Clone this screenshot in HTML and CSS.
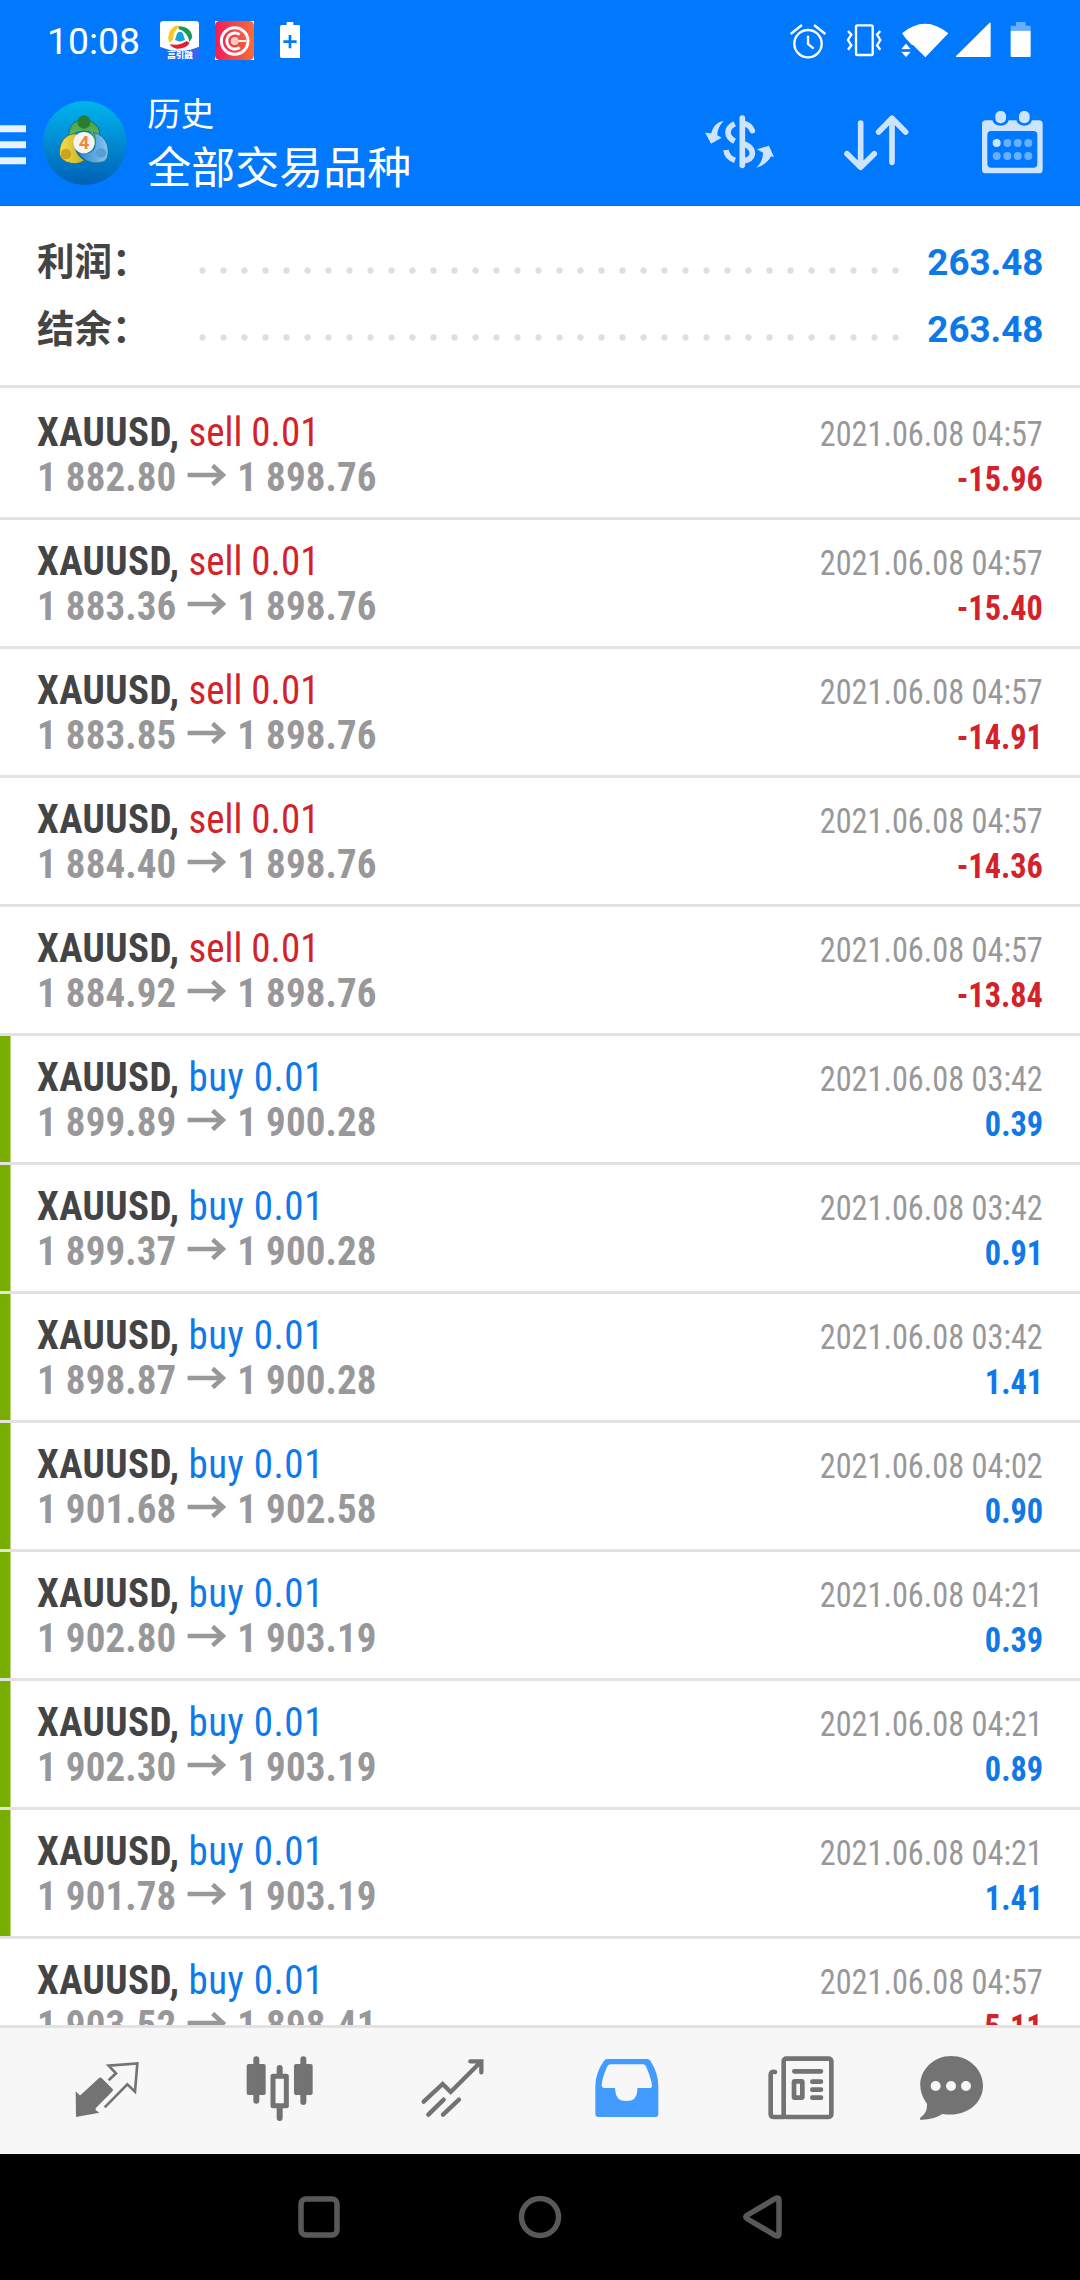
FILE: index.html
```html
<!DOCTYPE html>
<html lang="zh-CN">
<head>
<meta charset="utf-8">
<title>历史</title>
<link rel="stylesheet" href="styles.css">
</head>
<body>
<svg width="0" height="0" class="defs">
  <symbol id="arrow" viewBox="0 0 39 24" preserveAspectRatio="none"><path d="M0 12H36M25.500 2.500L36 12L25.500 21.500" fill="none" stroke="currentColor" stroke-width="4.500"/></symbol>
</svg>
<header class="header">
  <div class="status">
    <span class="clock">10:08</span>
    <svg class="app-a" viewBox="480 60 117 117">
      <defs><linearGradient id="ga" x1="0" y1="0" x2="1" y2="0"><stop offset="0" stop-color="#0a75f8"/><stop offset="1" stop-color="#3565ee"/></linearGradient></defs>
      <rect x="480" y="60" width="117" height="117" rx="10" fill="url(#ga)"/>
      <path d="M490 60H587Q597 60 597 70V137Q539 162 480 137V70Q480 60 490 60Z" fill="#fff"/>
      <path d="M507 126Q498 94 524 76L541 74Q520 88 519 116Z" fill="#fbc91b"/>
      <path d="M536 76Q572 76 577 108L569 123Q562 92 536 84Z" fill="#19995a"/>
      <path d="M509 129Q537 136 560 120L569 126Q556 145 530 143Q516 140 509 129Z" fill="#e0212f"/>
      <path d="M525 117L529 104Q531 92 540 92Q549 92 551 104L555 117L540 122Z" fill="#1aa0d8"/>
      <text x="540" y="172" text-anchor="middle" class="app-label" textLength="76" lengthAdjust="spacingAndGlyphs">高引融</text>
    </svg>
    <svg class="app-b" viewBox="645 60 117 117">
      <defs><linearGradient id="gb"><stop offset="0" stop-color="#f01c5a"/><stop offset="1" stop-color="#fb6b35"/></linearGradient></defs>
      <path fill="#fff" d="M645 60H762V177H645Z"/><rect x="645" y="60" width="117" height="117" rx="14" fill="url(#gb)"/>
      <circle cx="704" cy="120" r="40" fill="none" stroke="#fff" stroke-width="9"/>
      <path d="M719 101A24 24 0 1 0 719 139" fill="none" stroke="#fff" stroke-width="9"/>
      <path d="M704 120H738" stroke="#fff" stroke-width="6"/>
      <circle cx="704" cy="120" r="12" fill="#ffc9c5"/>
    </svg>
    <svg class="saver" viewBox="840 60 61 120"><path fill="#fff" d="M860 66H880V75H896Q901 75 901 80V169Q901 174 896 174H845Q840 174 840 169V80Q840 75 845 75H860Z"/><path d="M850 125H890M870 105V145" stroke="#0079ff" stroke-width="8"/></svg>
    <div class="system">
      <svg width="55" height="40" viewBox="325 60 165 120" fill="none" stroke="#fff" stroke-width="7"><circle cx="385" cy="131" r="41"/><path d="M385 107V132L402 146M333 102L367 75M403 75L437 102"/></svg>
      <svg width="55" height="40" viewBox="490 60 165 120" fill="none" stroke="#fff" stroke-width="7"><rect x="529" y="76" width="50" height="89" rx="4"/><path d="M505 93L515 104L505 120L515 136L505 149M602 93L592 104L602 120L592 136L602 149"/></svg>
      <svg width="55" height="40" viewBox="655 60 165 120" fill="#fff"><path d="M667 100Q736 43 806 100L737 172L700 135H697L679 116Z"/><path stroke="#0079ff" stroke-width="3" d="M662 149L679 129L696 149ZM662 154H696L679 173Z"/></svg>
      <svg width="50" height="40" viewBox="820 60 150 120"><path fill="#fff" d="M933 68V168Q933 171 930 171H830Q827 170 830 167L929 69Q932 66 933 68Z"/></svg>
      <svg width="40" height="40" viewBox="970 60 120 120"><path fill="#66afff" d="M1009 66H1038V77H1053V92H993V77H1009Z"/><path fill="#fff" d="M993 92H1053V168Q1053 171 1050 171H996Q993 171 993 168Z"/></svg>
    </div>
  </div>
  <div class="bar">
    <svg class="menu" viewBox="0 360 79 150"><path stroke="#e6f2ff" stroke-width="21" d="M0 386H79M0 434H79M0 482H79"/></svg>
    <svg class="logo" viewBox="126 300 256 256">
      <defs>
        <linearGradient id="bg" x1="0" y1="0" x2="0" y2="1"><stop offset="0" stop-color="#00b5ee"/><stop offset="1" stop-color="#0060b6"/></linearGradient>
        <linearGradient id="gr" x1="0" y1="0" x2="0" y2="1"><stop offset="0" stop-color="#3f9f45"/><stop offset="1" stop-color="#7cc96c"/></linearGradient>
        <linearGradient id="ye"><stop offset="0" stop-color="#f4e04a"/><stop offset="1" stop-color="#c9ae22"/></linearGradient>
        <linearGradient id="bl"><stop offset="0" stop-color="#2a80ca"/><stop offset="1" stop-color="#86c6f2"/></linearGradient>
      </defs>
      <circle cx="254" cy="429" r="126" fill="url(#bg)"/>
      <g stroke="#075a68" stroke-width="2">
        <path fill="url(#gr)" d="M206 410Q207 369 235 361Q276 352 295 384Q304 405 291 440L279 433Q284 410 269 395Q237 388 206 410Z"/>
        <path fill="url(#ye)" d="M178 462Q178 405 227 400L238 413Q216 421 224 440Q231 470 255 481Q231 498 200 486Q183 480 178 462Z"/>
        <path fill="url(#bl)" d="M281 397Q313 405 323 437Q332 486 299 488Q256 497 229 450Q263 469 282 448Q291 429 281 397Z"/>
      </g>
      <ellipse cx="252" cy="366" rx="19" ry="20" fill="#287d30"/>
      <circle cx="198" cy="462" r="16" fill="#c8a51c"/>
      <ellipse cx="303" cy="459" rx="16" ry="14" fill="#579ed5"/>
      <circle cx="252" cy="428" r="32" fill="#f7f4f5"/>
      <text x="252" y="448" text-anchor="middle" class="logo-number">4</text>
    </svg>
    <div class="titles"><div class="subtitle">历史</div><div class="title">全部交易品种</div></div>
    <div class="actions">
      <svg width="73.300" height="70" viewBox="70 320 220 210">
        <g fill="none" stroke="#cce4ff" stroke-width="17"><path stroke-linecap="round" d="M188 353V495"/><path d="M165 370Q145 380 145 396Q145 413 165 423"/><path d="M139 449Q142 472 166 480"/><path d="M190 369Q212 374 218 391" stroke-linecap="round"/><path d="M190 430Q220 440 218 462Q215 479 190 482"/></g>
        <path fill="#cce4ff" d="M133 362C112 364 99 380 95 399L77 397L94 430L126 412L113 405C113 388 121 372 133 362ZM230 502C253 495 268 482 274 468L283 470L268 436L232 447L250 457C250 475 243 490 230 502Z"/>
      </svg>
      <svg width="68.300" height="70" viewBox="485 320 205 210" fill="none" stroke="#cce4ff" stroke-width="17" stroke-linecap="round" stroke-linejoin="round"><path d="M541 368V500M500 460L541 501L582 460M635 486V354M595 395L635 354L676 395"/></svg>
      <svg width="65" height="70" viewBox="900 320 195 210">
        <path fill="#cce4ff" fill-rule="evenodd" d="M918 360H937Q943 376 962 376Q981 376 986 360H1009Q1015 376 1033 376Q1051 376 1056 360H1077Q1088 360 1088 371V508Q1088 519 1077 519H918Q906 519 906 508V371Q906 360 918 360ZM934 392Q922 392 922 404V490Q922 502 934 502H1060Q1072 502 1072 490V404Q1072 392 1060 392Z"/>
        <g fill="#cce4ff"><rect x="946" y="332" width="32" height="37" rx="15"/><rect x="1017" y="332" width="32" height="37" rx="15"/><circle cx="950" cy="428" r="12"/></g>
        <g fill="#66b0ff"><circle cx="982" cy="428" r="12"/><circle cx="1013" cy="428" r="12"/><circle cx="1045" cy="428" r="12"/><circle cx="950" cy="467" r="12"/><circle cx="982" cy="467" r="12"/><circle cx="1013" cy="467" r="12"/><circle cx="1045" cy="467" r="12"/></g>
      </svg>
    </div>
  </div>
</header>
<section class="summary">
  <div class="sum-row"><span class="label">利润：</span><i class="dots"></i><span class="total">263.48</span></div>
  <div class="sum-row"><span class="label">结余：</span><i class="dots"></i><span class="total">263.48</span></div>
</section>
<main class="deals">
  <div class="deal"><div class="line"><span class="order"><b class="symbol">XAUUSD,</b> <span class="sell">sell 0.01</span></span><time>2021.06.08 04:57</time></div><div class="line"><span class="price">1 882.80<svg class="to"><use href="#arrow"/></svg>1 898.76</span><b class="profit loss">-15.96</b></div></div>
  <div class="deal"><div class="line"><span class="order"><b class="symbol">XAUUSD,</b> <span class="sell">sell 0.01</span></span><time>2021.06.08 04:57</time></div><div class="line"><span class="price">1 883.36<svg class="to"><use href="#arrow"/></svg>1 898.76</span><b class="profit loss">-15.40</b></div></div>
  <div class="deal"><div class="line"><span class="order"><b class="symbol">XAUUSD,</b> <span class="sell">sell 0.01</span></span><time>2021.06.08 04:57</time></div><div class="line"><span class="price">1 883.85<svg class="to"><use href="#arrow"/></svg>1 898.76</span><b class="profit loss">-14.91</b></div></div>
  <div class="deal"><div class="line"><span class="order"><b class="symbol">XAUUSD,</b> <span class="sell">sell 0.01</span></span><time>2021.06.08 04:57</time></div><div class="line"><span class="price">1 884.40<svg class="to"><use href="#arrow"/></svg>1 898.76</span><b class="profit loss">-14.36</b></div></div>
  <div class="deal"><div class="line"><span class="order"><b class="symbol">XAUUSD,</b> <span class="sell">sell 0.01</span></span><time>2021.06.08 04:57</time></div><div class="line"><span class="price">1 884.92<svg class="to"><use href="#arrow"/></svg>1 898.76</span><b class="profit loss">-13.84</b></div></div>
  <div class="deal tp"><div class="line"><span class="order"><b class="symbol">XAUUSD,</b> <span class="buy">buy 0.01</span></span><time>2021.06.08 03:42</time></div><div class="line"><span class="price">1 899.89<svg class="to"><use href="#arrow"/></svg>1 900.28</span><b class="profit">0.39</b></div></div>
  <div class="deal tp"><div class="line"><span class="order"><b class="symbol">XAUUSD,</b> <span class="buy">buy 0.01</span></span><time>2021.06.08 03:42</time></div><div class="line"><span class="price">1 899.37<svg class="to"><use href="#arrow"/></svg>1 900.28</span><b class="profit">0.91</b></div></div>
  <div class="deal tp"><div class="line"><span class="order"><b class="symbol">XAUUSD,</b> <span class="buy">buy 0.01</span></span><time>2021.06.08 03:42</time></div><div class="line"><span class="price">1 898.87<svg class="to"><use href="#arrow"/></svg>1 900.28</span><b class="profit">1.41</b></div></div>
  <div class="deal tp"><div class="line"><span class="order"><b class="symbol">XAUUSD,</b> <span class="buy">buy 0.01</span></span><time>2021.06.08 04:02</time></div><div class="line"><span class="price">1 901.68<svg class="to"><use href="#arrow"/></svg>1 902.58</span><b class="profit">0.90</b></div></div>
  <div class="deal tp"><div class="line"><span class="order"><b class="symbol">XAUUSD,</b> <span class="buy">buy 0.01</span></span><time>2021.06.08 04:21</time></div><div class="line"><span class="price">1 902.80<svg class="to"><use href="#arrow"/></svg>1 903.19</span><b class="profit">0.39</b></div></div>
  <div class="deal tp"><div class="line"><span class="order"><b class="symbol">XAUUSD,</b> <span class="buy">buy 0.01</span></span><time>2021.06.08 04:21</time></div><div class="line"><span class="price">1 902.30<svg class="to"><use href="#arrow"/></svg>1 903.19</span><b class="profit">0.89</b></div></div>
  <div class="deal tp"><div class="line"><span class="order"><b class="symbol">XAUUSD,</b> <span class="buy">buy 0.01</span></span><time>2021.06.08 04:21</time></div><div class="line"><span class="price">1 901.78<svg class="to"><use href="#arrow"/></svg>1 903.19</span><b class="profit">1.41</b></div></div>
  <div class="deal"><div class="line"><span class="order"><b class="symbol">XAUUSD,</b> <span class="buy">buy 0.01</span></span><time>2021.06.08 04:57</time></div><div class="line"><span class="price">1 903.52<svg class="to"><use href="#arrow"/></svg>1 898.41</span><b class="profit loss">-5.11</b></div></div>
</main>
<nav class="tabs">
  <svg viewBox="23 84 240 240"><path fill="#737373" d="M49 214L61 226L64 225L120 173Q125 171 129 176L160 207Q163 211 158 215L109 265V270L120 278L50 291Z"/><path fill="none" stroke="#737373" stroke-width="8" d="M148 181L170 160L148 137L234 130L227 215L204 193L136 262"/></svg>
  <svg viewBox="544 84 240 240"><g fill="#737373"><rect x="561" y="132" width="57" height="93" rx="6"/><rect x="703" y="132" width="56" height="93" rx="6"/></g><g fill="none" stroke="#737373" stroke-linecap="round" stroke-width="18"><path d="M590 118V242M731 118V246M660 144V166M660 260V294"/></g><rect x="640" y="169" width="40" height="88" fill="#f7f7f7" stroke="#737373" stroke-width="15" stroke-linejoin="round"/></svg>
  <svg viewBox="1064 84 240 240" fill="none" stroke="#737373" stroke-width="13" stroke-linecap="round"><path d="M1093 245L1150 192L1174 216L1264 126M1233 124H1266V157M1107 284L1153 239M1151 284L1199 239"/></svg>
  <svg viewBox="25 84 240 240"><path fill="#439bfe" fill-rule="evenodd" d="M83 117H202Q209 117 213 124Q236 160 236 197V282Q236 291 227 291H57Q47 291 47 282V197Q47 160 72 124Q76 117 83 117ZM92 133Q85 134 82 141Q66 178 66 197Q67 204 74 204H105Q107 204 107 213Q108 243 140 243Q172 243 173 213V204H209Q217 204 217 197Q216 180 200 141Q197 133 191 133Z"/></svg>
  <svg viewBox="545 84 240 240" fill="none" stroke="#737373" stroke-width="14" stroke-linecap="round"><rect x="613" y="116" width="143" height="175" rx="8"/><path d="M587 156Q574 153 574 165V281Q574 291 584 291H615M645 154H725M699 185H725M699 209H725M699 233H725"/><rect x="644" y="184" width="25" height="49" rx="2"/></svg>
  <svg viewBox="993 84 240 240"><path fill="#737373" d="M1021 299Q1018 297 1023 291Q1043 278 1041 251C990 184 1043 108 1113 108C1166 108 1209 148 1209 197C1209 249 1160 293 1087 282Q1056 301 1021 299Z"/><g fill="#f7f7f7"><circle cx="1067" cy="198" r="15"/><circle cx="1113" cy="198" r="15"/><circle cx="1158" cy="198" r="15"/></g></svg>
</nav>
<footer class="system-nav">
  <svg viewBox="0 0 48 48"><rect x="6" y="6" width="36" height="36" rx="5"/></svg>
  <svg viewBox="0 0 48 48"><circle cx="24" cy="24" r="18.500"/></svg>
  <svg viewBox="0 0 48 48"><path d="M9.500 22L37.500 5.500Q41 4 41 7V41Q41 44 37.500 42.500L9.500 26Q6 24 9.500 22Z"/></svg>
</footer>
</body>
</html>
```
FILE: styles.css
```css
* { box-sizing: border-box; }
body {
  margin: 0;
  width: 1080px;
  height: 2280px;
  overflow: hidden;
  display: flex;
  flex-direction: column;
  background: #fff;
  font-family: Roboto, "Noto Sans CJK SC", sans-serif;
}
svg { display: block; flex: none; }
.defs { height: 0; width: 0; position: absolute; }

.header { height: 206px; background: #0079ff; color: #fff; border-bottom: 1px solid #126fd8; flex: none; }
.status { height: 80px; display: flex; align-items: center; padding: 0 36.700px 0 47px; }
.clock { font-size: 37.300px; width: 113px; line-height: 80px; padding-top: 2px; }
.app-a { width: 39px; height: 39px; }
.app-b { width: 39px; height: 39px; margin-left: 16px; }
.app-label { font: 900 25px "Noto Sans CJK SC", sans-serif; fill: #fff; }
.saver { width: 20.300px; height: 40px; margin-left: 26px; }
.system { display: flex; margin-left: auto; }
.bar { height: 125px; display: flex; padding-right: 35px; }
.menu { width: 26.300px; height: 50px; margin-top: 40px; }
.logo { width: 85.300px; height: 85.300px; margin: 20px 0 0 15.700px; }
.logo-number { font: 700 56px Roboto, sans-serif; fill: #ee8644; }
.titles { margin-left: 20px; padding-top: 12.500px; font-weight: 400; }
.subtitle { font-size: 33.500px; line-height: 44px; }
.title { font-size: 44px; line-height: 60px; margin-top: 2px; }
.actions { display: flex; margin: 26.700px 0 0 auto; }
.actions svg:nth-child(2) { margin-left: 65px; }
.actions svg:nth-child(3) { margin-left: 70px; }

.summary { height: 182px; flex: none; padding: 22px 37px 0 37px; border-bottom: 3px solid #e2e2e2; }
.sum-row { height: 67px; display: flex; align-items: center; }
.label { width: 155px; font: 700 37.500px/67px "Noto Sans CJK SC", sans-serif; color: #444; margin-top: -6px; }
.dots { width: 714px; height: 21px; margin-top: 17px; background: radial-gradient(circle, #dedede 2.800px, transparent 3.500px) 0 0 / 21px 21px; }
.total { margin-left: auto; font-size: 37.500px; font-weight: 700; color: #0d78e8; transform: scaleX(.98); transform-origin: right; }

.deals { flex: 1; min-height: 0; overflow: hidden; padding-top: 3px; font-stretch: 75%; }
.deal { height: 129px; padding: 16px 37px 0 37px; border-bottom: 3px solid #e2e2e2; }
.tp { background: linear-gradient(#79ad00, #79ad00) left / 10.500px 100% no-repeat; background-clip: padding-box; background-origin: padding-box; }
.line { height: 45px; display: flex; justify-content: space-between; align-items: baseline; font-size: 41.250px; line-height: 50px; white-space: nowrap; }
.order, .price { transform: scaleX(.945); transform-origin: left; }
time, .profit { transform: scaleX(.938); transform-origin: right; }
.symbol { color: #444; letter-spacing: .450px; }
.sell { color: #d3222a; }
.buy { color: #1078e8; letter-spacing: .550px; }
time { font-size: 34.400px; color: #98989a; }
.price { color: #98989a; font-weight: 700; letter-spacing: .100px; }
.to { display: inline-block; width: 41px; height: 24px; margin: 0 11.500px 0 12px; vertical-align: 4px; }
.profit { font-size: 34.400px; color: #1078e8; }
.loss { color: #d3222a; }

.tabs { height: 129px; flex: none; background: #f7f7f7; border-top: 3px solid #e2e2e2; padding: 20px 0 0 20.500px; display: grid; grid-template-columns: repeat(5, 173.500px) 125px; justify-items: center; }
.tabs svg { width: 80px; height: 80px; }
.system-nav { height: 126px; flex: none; background: #000; display: flex; justify-content: center; align-items: center; gap: 173.500px; }
.system-nav svg { width: 48px; height: 48px; fill: none; stroke: #595959; stroke-width: 5.500px; }
```
